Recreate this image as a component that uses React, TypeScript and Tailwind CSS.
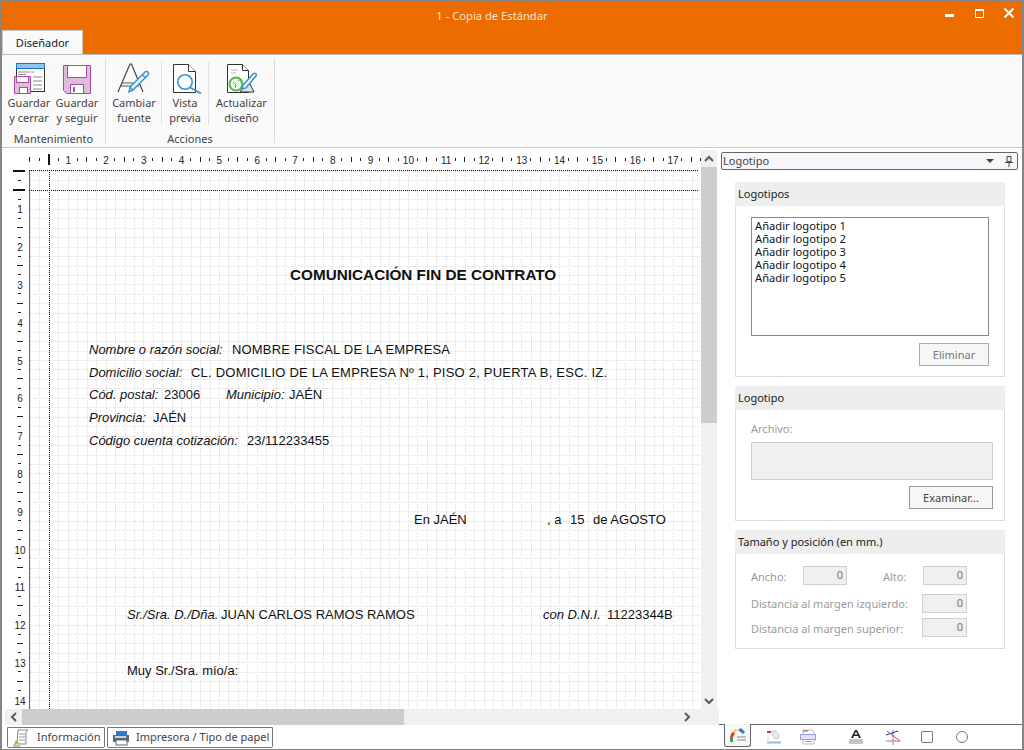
import React from "react";

const UI = "font-['Noto_Sans',sans-serif]";
const DOC = "absolute mt-[1px] whitespace-pre text-[13px] leading-4 text-[#111] font-['Liberation_Sans',sans-serif]";

const range = (n: number) => Array.from({ length: n }, (_, i) => i);

function TopRuler() {
  return (
    <svg width={699} height={22} className="block">
      {range(72).map((i) => {
        if (i === 2 || (i % 4 === 0 && i > 0)) return null;
        const x = Math.round(27.4 + i * 9.45);
        const half = i % 2 === 0;
        return <rect key={i} x={x} y={half ? 9 : 10} width={1} height={half ? 5 : 3} fill="#222" />;
      })}
      <rect x={46} y={6} width={2} height={11} fill="#111" />
      {range(17).map((i) => (
        <text key={i} x={28.4 + (i + 1) * 37.8} y={15.5} fontSize={10} textAnchor="middle" fill="#222" fontFamily="Liberation Sans">
          {i + 1}
        </text>
      ))}
    </svg>
  );
}

function SideRuler() {
  return (
    <svg width={27} height={539} className="block shrink-0">
      <rect x={11} y={0} width={12} height={2} fill="#111" />
      <rect x={11} y={19} width={12} height={2} fill="#111" />
      {range(60).map((i) => {
        if (i % 4 === 0 || i === 2) return null;
        const y = Math.round(i * 9.45 + 0.5);
        const half = i % 2 === 0;
        return <rect key={i} x={half ? 15 : 16} y={y} width={half ? 6 : 3} height={1} fill="#222" />;
      })}
      {range(14).map((i) => (
        <text key={i} x={18} y={2 + (i + 1) * 37.8 + 3.5} fontSize={10} textAnchor="middle" fill="#222" fontFamily="Liberation Sans">
          {i + 1}
        </text>
      ))}
    </svg>
  );
}

function Grid() {
  const xs = range(72).map((i) => Math.round(i * 9.45) + 1.5);
  const ys = range(57).map((i) => Math.round(i * 9.45) + 1.5);
  return (
    <svg width={672} height={539} className="absolute left-0 top-0">
      {xs.map((x) => (
        <line key={x} x1={x} x2={x} y1={0} y2={539} stroke="#dedede" strokeDasharray="1 1" />
      ))}
      {ys.map((y) => (
        <line key={y} y1={y} y2={y} x1={0} x2={672} stroke="#dedede" strokeDasharray="1 1" />
      ))}
      <line x1={0.5} x2={0.5} y1={0} y2={539} stroke="#666" />
      <line x1={0} x2={670} y1={0.5} y2={0.5} stroke="#111" strokeDasharray="1 1" />
      <line x1={0} x2={670} y1={20.5} y2={20.5} stroke="#111" strokeDasharray="1 1" />
      <line x1={20.5} x2={20.5} y1={0} y2={539} stroke="#111" strokeDasharray="1 1" />
    </svg>
  );
}

function Chevron({ d }: { d: string }) {
  return (
    <svg width={10} height={10} viewBox="0 0 10 10" className="block">
      <path d={d} fill="none" stroke="#5a5a5a" strokeWidth={2} />
    </svg>
  );
}

function SaveCloseIcon() {
  return (
    <svg width={34} height={34} viewBox="0 0 34 34" className="block">
      <g transform="translate(1 0)">
        <rect x={3.5} y={1.5} width={28} height={28} fill="#fff" stroke="#333" />
        <rect x={3.5} y={1.5} width={28} height={5} fill="#8ec4ec" stroke="#1b75bc" />
        <path d="M5 10h12M18 10h3M5 12.5h8M20 15h9M20 19h9M20 23h9M20 27h9" stroke="#888" />
        <path d="M1.5 14.5h16v17h-16z" fill="#dfbcdc" stroke="#a64ca6" />
        <rect x={3.5} y={14.5} width={12} height={6} fill="#fff" stroke="#a64ca6" />
        <rect x={6.5} y={25.5} width={8} height={6} fill="#fff" stroke="#a64ca6" />
      </g>
    </svg>
  );
}

function FloppyIcon() {
  return (
    <svg width={34} height={34} viewBox="0 0 34 34" className="block">
      <g transform="translate(0 1)">
        <path d="M3.5 2.5h27v28h-24l-3-3z" fill="#dfbcdc" stroke="#a64ca6" />
        <rect x={7.5} y={2.5} width={19} height={12} fill="#fff" stroke="#a64ca6" />
        <rect x={10.5} y={21.5} width={13} height={9} fill="#fff" stroke="#a64ca6" />
        <rect x={13} y={24} width={2} height={5} fill="#777" />
      </g>
    </svg>
  );
}

function FontIcon() {
  return (
    <svg width={36} height={34} viewBox="0 0 36 34" className="block">
      <path d="M2 30L14 2h1.5L27 30" fill="none" stroke="#444" strokeWidth={1.2} />
      <path d="M6 21h17M5 24h18" stroke="#555" />
      <path d="M13 30l1-5L29 10c2-2 5 1 3 3L17 28z" fill="#e8f4fc" stroke="#2f8fd3" strokeWidth={1.4} />
      <path d="M26 13l4 3M14 25l3 3" stroke="#2f8fd3" strokeWidth={1.2} />
    </svg>
  );
}

function PreviewIcon() {
  return (
    <svg width={34} height={34} viewBox="0 0 34 34" className="block">
      <g transform="translate(3 0)">
        <path d="M2.5 2.5h15l7 7v21h-22z" fill="#fff" stroke="#333" />
        <path d="M17.5 2.5v7h7" fill="#fff" stroke="#333" />
        <circle cx={14} cy={20} r={7.2} fill="#fff" fillOpacity={0.8} stroke="#2f95da" strokeWidth={1.6} />
        <path d="M19 25.5l11 6" stroke="#2f95da" strokeWidth={1.8} />
      </g>
    </svg>
  );
}

function UpdateIcon() {
  return (
    <svg width={36} height={34} viewBox="0 0 36 34" className="block">
      <path d="M3.5 2.5h15l6 6v22h-21z" fill="#fff" stroke="#333" />
      <path d="M18.5 2.5v6h6" fill="#fff" stroke="#333" />
      <path d="M7 8h7M7 11h5" stroke="#bbb" />
      <circle cx={12} cy={22} r={6.5} fill="#eef8ec" stroke="#55b548" strokeWidth={2} />
      <path d="M9 20l3 3-1 3M14 19l3-2v4" fill="none" stroke="#55b548" />
      <path d="M24 18l6 12H16z" fill="#dfe1e4" stroke="#333" />
      <path d="M18 27l1-4 10-11c2-2 4 0 3 2L22 26z" fill="#e8f4fc" stroke="#2f8fd3" strokeWidth={1.4} />
    </svg>
  );
}

function RibbonButton({ icon, a, b, w }: { icon: React.ReactNode; a: string; b: string; w: string }) {
  return (
    <div className={`flex flex-col items-center ${w}`}>
      <div className="flex h-[33px] items-center justify-center">{icon}</div>
      <div className="text-center text-[11px] leading-[15px] text-[#444]">
        {a}
        <br />
        {b}
      </div>
    </div>
  );
}

function Group({ title, h, children, bodyClass }: { title: string; h: string; children: React.ReactNode; bodyClass?: string }) {
  return (
    <div className={`flex flex-col border border-[#dcdcdc] bg-white ${h}`}>
      <div className="mx-[-1px] mt-[-1px] h-[24px] bg-[#eeeeee] pl-[3px] text-[11px] leading-[23px] text-[#222]">{title}</div>
      <div className={`flex-1 ${bodyClass ?? ""}`}>{children}</div>
    </div>
  );
}

function NumberBox({ w }: { w: string }) {
  return (
    <div className={`h-[19px] border border-[#cfcfcf] bg-[#efefef] pr-[3px] text-right text-[11px] leading-[15px] text-[#777] ${w}`}>0</div>
  );
}

const muted = "text-[11px] leading-[15px] text-[#9a9a9a]";

export default function App() {
  return (
    <div className={`flex h-[750px] w-[1024px] flex-col overflow-hidden border-x-2 border-y border-[#858585] bg-white ${UI}`}>
      {/* title bar */}
      <div className="relative h-[53px] shrink-0 bg-[#ed6c00]">
        <div className="pr-[40px] pt-[6px] text-center text-[11.2px] leading-[17px] text-[#fbe3cf]">1 - Copia de Estándar</div>
        <div className="absolute right-[7px] top-[6px] flex items-center gap-[17px]">
          <svg width={13} height={10} viewBox="0 0 13 10"><rect x={2} y={6} width={9} height={3} fill="#fff" /></svg>
          <svg width={13} height={10} viewBox="0 0 13 10"><path d="M2.5 1.5h8v8h-8z" fill="none" stroke="#fff" /><rect x={2} y={1} width={9} height={2} fill="#fff" /></svg>
          <svg width={12} height={12} viewBox="0 0 12 12"><path d="M1.5 1.5l9 9M10.5 1.5l-9 9" stroke="#fff" strokeWidth={2} /></svg>
        </div>
        <div className="absolute bottom-0 left-0 h-[24px] w-[81px] border-x border-t border-[#c9c9c9] bg-[#fafafa] text-center text-[11px] leading-[23px] text-[#222]">Diseñador</div>
      </div>

      {/* ribbon */}
      <div className="flex h-[94px] shrink-0 border-y border-[#c9c9c9] border-t-[#bdbdbd] bg-[#fafafa]">
        <div className="mt-[4px] flex h-[84px] w-[104px] flex-col border-r border-[#d9d9d9] pt-[3px]">
          <div className="flex pl-[3px]">
            <RibbonButton icon={<SaveCloseIcon />} a="Guardar" b="y cerrar" w="w-[48px]" />
            <RibbonButton icon={<FloppyIcon />} a="Guardar" b="y seguir" w="w-[48px]" />
          </div>
          <div className="mt-[6px] text-center text-[11px] leading-[15px] text-[#444]">Mantenimiento</div>
        </div>
        <div className="mt-[4px] flex h-[84px] w-[169px] flex-col border-r border-[#d9d9d9] pt-[3px]">
          <div className="flex">
            <div className="w-[56px] border-r border-[#e2e2e2]"><RibbonButton icon={<FontIcon />} a="Cambiar" b="fuente" w="w-[56px]" /></div>
            <div className="w-[47px] border-r border-[#e2e2e2]"><RibbonButton icon={<PreviewIcon />} a="Vista" b="previa" w="w-[46px]" /></div>
            <RibbonButton icon={<UpdateIcon />} a="Actualizar" b="diseño" w="w-[65px]" />
          </div>
          <div className="mt-[6px] text-center text-[11px] leading-[15px] text-[#444]">Acciones</div>
        </div>
      </div>

      {/* main */}
      <div className="flex min-h-0 flex-1">
        <div className="flex w-[717px] shrink-0 flex-col">
          <div className="flex h-[561px]">
            <div className="flex w-[699px] flex-col">
              <TopRuler />
              <div className="flex flex-1">
                <SideRuler />
                <div className="relative h-[539px] w-[672px] overflow-hidden bg-white">
                  <Grid />
                  <div className={`${DOC} left-[261px] top-[96px] text-[15.3px] font-bold`}>COMUNICACIÓN FIN DE CONTRATO</div>
                  <div className={`${DOC} left-[60px] top-[171px] italic`}>Nombre o razón social:</div>
                  <div className={`${DOC} left-[203px] top-[171px] text-[13.3px] tracking-[0.18px]`}>NOMBRE FISCAL DE LA EMPRESA</div>
                  <div className={`${DOC} left-[60px] top-[194px] italic`}>Domicilio social:</div>
                  <div className={`${DOC} left-[162px] top-[194px] text-[13.4px] tracking-[0.22px]`}>CL. DOMICILIO DE LA EMPRESA Nº 1, PISO 2, PUERTA B, ESC. IZ.</div>
                  <div className={`${DOC} left-[60px] top-[216px] italic`}>Cód. postal:</div>
                  <div className={`${DOC} left-[135px] top-[216px]`}>23006</div>
                  <div className={`${DOC} left-[197px] top-[216px] italic`}>Municipio:</div>
                  <div className={`${DOC} left-[260px] top-[216px]`}>JAÉN</div>
                  <div className={`${DOC} left-[60px] top-[239px] italic`}>Provincia:</div>
                  <div className={`${DOC} left-[124px] top-[239px]`}>JAÉN</div>
                  <div className={`${DOC} left-[60px] top-[262px] italic`}>Código cuenta cotización:</div>
                  <div className={`${DOC} left-[218px] top-[262px]`}>23/112233455</div>
                  <div className={`${DOC} left-[385px] top-[341px]`}>En JAÉN</div>
                  <div className={`${DOC} left-[518px] top-[341px]`}>, a</div>
                  <div className={`${DOC} left-[541px] top-[341px]`}>15</div>
                  <div className={`${DOC} left-[564px] top-[341px]`}>de AGOSTO</div>
                  <div className={`${DOC} left-[98px] top-[436px] italic`}>Sr./Sra. D./Dña.</div>
                  <div className={`${DOC} left-[192px] top-[436px]`}>JUAN CARLOS RAMOS RAMOS</div>
                  <div className={`${DOC} left-[514px] top-[436px] italic`}>con D.N.I.</div>
                  <div className={`${DOC} left-[578px] top-[436px]`}>11223344B</div>
                  <div className={`${DOC} left-[98px] top-[492px]`}>Muy Sr./Sra. mío/a:</div>
                </div>
              </div>
            </div>
            {/* vertical scrollbar */}
            <div className="mt-[2px] flex w-[16px] flex-col bg-[#f0f0f0]">
              <div className="flex h-[17px] items-center justify-center"><Chevron d="M1 7l4-4 4 4" /></div>
              <div className="h-[256px] bg-[#cdcdcd]" />
              <div className="flex-1" />
              <div className="flex h-[17px] items-center justify-center"><Chevron d="M1 3l4 4 4-4" /></div>
            </div>
          </div>
          {/* horizontal scrollbar */}
          <div className="ml-[3px] flex h-[16px] bg-[#f0f0f0]">
            <div className="flex w-[17px] items-center justify-center"><Chevron d="M7 1L3 5l4 4" /></div>
            <div className="w-[382px] bg-[#cdcdcd]" />
            <div className="flex-1" />
            <div className="mr-[24px] flex w-[17px] items-center justify-center"><Chevron d="M3 1l4 4-4 4" /></div>
          </div>
          {/* bottom tabs */}
          <div className="ml-[5px] mt-[2px] flex gap-[2px]">
            <div className="flex h-[21px] w-[98px] items-center rounded-b-[2px] border border-[#777] pl-[4px] text-[11px] text-[#444]">
              <svg width={18} height={18} viewBox="0 0 18 18" className="shrink-0">
                <path d="M6 1h10l-2 2v12H5z" fill="#fff" stroke="#888" />
                <path d="M7 5h6M7 8h6M7 11h6" stroke="#999" />
                <path d="M1 17l3-6 3 3-6 3z" fill="#e8a33a" />
                <path d="M1.5 17H8" stroke="#4a90d2" />
              </svg>
              <span className="ml-[7px]">Información</span>
            </div>
            <div className="flex h-[21px] w-[166px] items-center rounded-b-[2px] border border-[#777] pl-[4px] text-[11px] text-[#444]">
              <svg width={18} height={18} viewBox="0 0 18 18" className="shrink-0">
                <rect x={4} y={2} width={11} height={5} fill="#2f7fc8" />
                <rect x={1} y={6} width={16} height={7} fill="#666" />
                <rect x={4} y={11} width={11} height={5} fill="#fff" stroke="#666" />
                <rect x={3} y={7} width={11} height={2} fill="#bcd7f0" />
              </svg>
              <span className="ml-[6px]">Impresora / Tipo de papel</span>
            </div>
          </div>
        </div>

        {/* right panel */}
        <div className="flex min-w-0 flex-1 flex-col">
          <div className="ml-[2px] mr-[4px] mt-[4px] flex h-[18px] items-center rounded-[2px] border border-[#666] bg-[#f7f7fb] pl-[1px] pr-[3px] text-[11px] leading-[16px] text-[#444]">
            <span className="flex-1">Logotipo</span>
            <svg width={10} height={6} viewBox="0 0 10 6" className="mr-[9px]"><path d="M1 1h8L5 5z" fill="#444" /></svg>
            <svg width={10} height={11} viewBox="0 0 10 11"><path d="M3 .5h4v5H3zM1 6.5h8M5 7v4" fill="none" stroke="#444" /></svg>
          </div>
          <div className="ml-[16px] mr-[17px] mt-[12px] flex flex-col gap-[9px]">
            <Group title="Logotipos" h="h-[195px]" bodyClass="px-[15px] pt-[11px]">
              <div className="h-[119px] border border-[#8a8a8a] px-[3px] pt-[1px] text-[11.2px] leading-[13px] text-[#111]">
                <div>Añadir logotipo 1</div>
                <div>Añadir logotipo 2</div>
                <div>Añadir logotipo 3</div>
                <div>Añadir logotipo 4</div>
                <div>Añadir logotipo 5</div>
              </div>
              <div className="mt-[7px] flex justify-end">
                <div className="h-[23px] w-[70px] border border-[#aaa] bg-[#f6f6f6] text-center text-[11px] leading-[21px] text-[#777]">Eliminar</div>
              </div>
            </Group>
            <Group title="Logotipo" h="h-[135px]" bodyClass="px-[15px] pt-[11px]">
              <div className={muted}>Archivo:</div>
              <div className="mt-[6px] h-[38px] w-[242px] border border-[#cfcfcf] bg-[#efefef]" />
              <div className="mt-[6px] flex w-[242px] justify-end">
                <div className="h-[23px] w-[84px] border border-[#999] bg-[#f6f6f6] text-center text-[11px] leading-[21px] text-[#444]">Examinar...</div>
              </div>
            </Group>
            <Group title="Tamaño y posición (en mm.)" h="h-[119px]" bodyClass="pl-[15px] pt-[12px]">
              <div className="flex h-[19px] items-center">
                <span className={`${muted} w-[52px] pt-[2px]`}>Ancho:</span>
                <NumberBox w="w-[44px]" />
                <span className={`${muted} ml-[36px] w-[40px] pt-[2px]`}>Alto:</span>
                <NumberBox w="w-[44px]" />
              </div>
              <div className="mt-[9px] flex h-[19px] items-center">
                <span className={`${muted} w-[171px]`}>Distancia al margen izquierdo:</span>
                <NumberBox w="w-[45px]" />
              </div>
              <div className="mt-[5px] flex h-[19px] items-center">
                <span className={`${muted} w-[171px] pt-[2px]`}>Distancia al margen superior:</span>
                <NumberBox w="w-[45px]" />
              </div>
            </Group>
          </div>
          <div className="flex-1" />
          {/* bottom tool tabs */}
          <div className="flex h-[24px] items-start">
            <div className="w-[5px] border-t border-[#666]" />
            <div className="flex h-[23px] w-[27px] items-center justify-center rounded-b-[3px] border-x border-b border-[#666] bg-[#f7f7fb]">
              <svg width={18} height={16} viewBox="0 0 18 16">
                <path d="M1 15V10h3v5z" fill="#2fae3c" />
                <path d="M1 10l2-5 3 1-2 4z" fill="#e0352b" />
                <path d="M3 5l3-3 3 1-3 3z" fill="#f4d63a" />
                <path d="M9 3l3-2 4 4-2 2z" fill="#2f7fc8" />
                <path d="M8 10h9M8 13h9" stroke="#888" />
              </svg>
            </div>
            <div className="flex h-[24px] flex-1 items-center border-t border-[#666] pl-[14px]">
              <svg width={16} height={16} viewBox="0 0 16 16" className="ml-[1px]">
                <path d="M1 3h4" stroke="#d33" strokeWidth={2} />
                <path d="M6 2h4l3 3v4l-4 1-3-5z" fill="#e9e9e9" stroke="#ccc" />
                <path d="M1 13.5h14" stroke="#8ebde8" strokeWidth={2} />
                <path d="M2 6v7" stroke="#ddd" />
              </svg>
              <svg width={18} height={16} viewBox="0 0 18 16" className="ml-[17px]">
                <path d="M4 1h9l2 2v12H4z" fill="#fff" stroke="#b8b8c8" />
                <path d="M4 2h5" stroke="#d33" />
                <rect x={1.5} y={5.5} width={15} height={5} fill="#dfe0fb" stroke="#9a9ee8" />
                <path d="M6 12.5h7" stroke="#aaa" />
              </svg>
              <svg width={16} height={15} viewBox="0 0 16 15" className="ml-[31px]">
                <path d="M3 9l4-8h2l4 8h-2l-1-2H6L5 9zM6.5 5.5h3L8 2.5z" fill="#222" fillRule="evenodd" />
                <path d="M1 11h14M1 13h14M1 15h14" stroke="#888" />
              </svg>
              <svg width={18} height={16} viewBox="0 0 18 16" className="ml-[20px]">
                <path d="M9 1v15M2 12h14" stroke="#888" />
                <path d="M2 6l12-4" stroke="#2222cc" />
                <path d="M3 2l13 10" stroke="#d33" />
              </svg>
              <svg width={12} height={12} viewBox="0 0 12 12" className="ml-[19px]">
                <rect x={0.5} y={0.5} width={11} height={11} rx={1.5} fill="none" stroke="#777" />
              </svg>
              <svg width={12} height={12} viewBox="0 0 12 12" className="ml-[23px]">
                <circle cx={6} cy={6} r={5.5} fill="none" stroke="#777" />
              </svg>
            </div>
          </div>
          <div className="h-[1px]" />
        </div>
      </div>
    </div>
  );
}
